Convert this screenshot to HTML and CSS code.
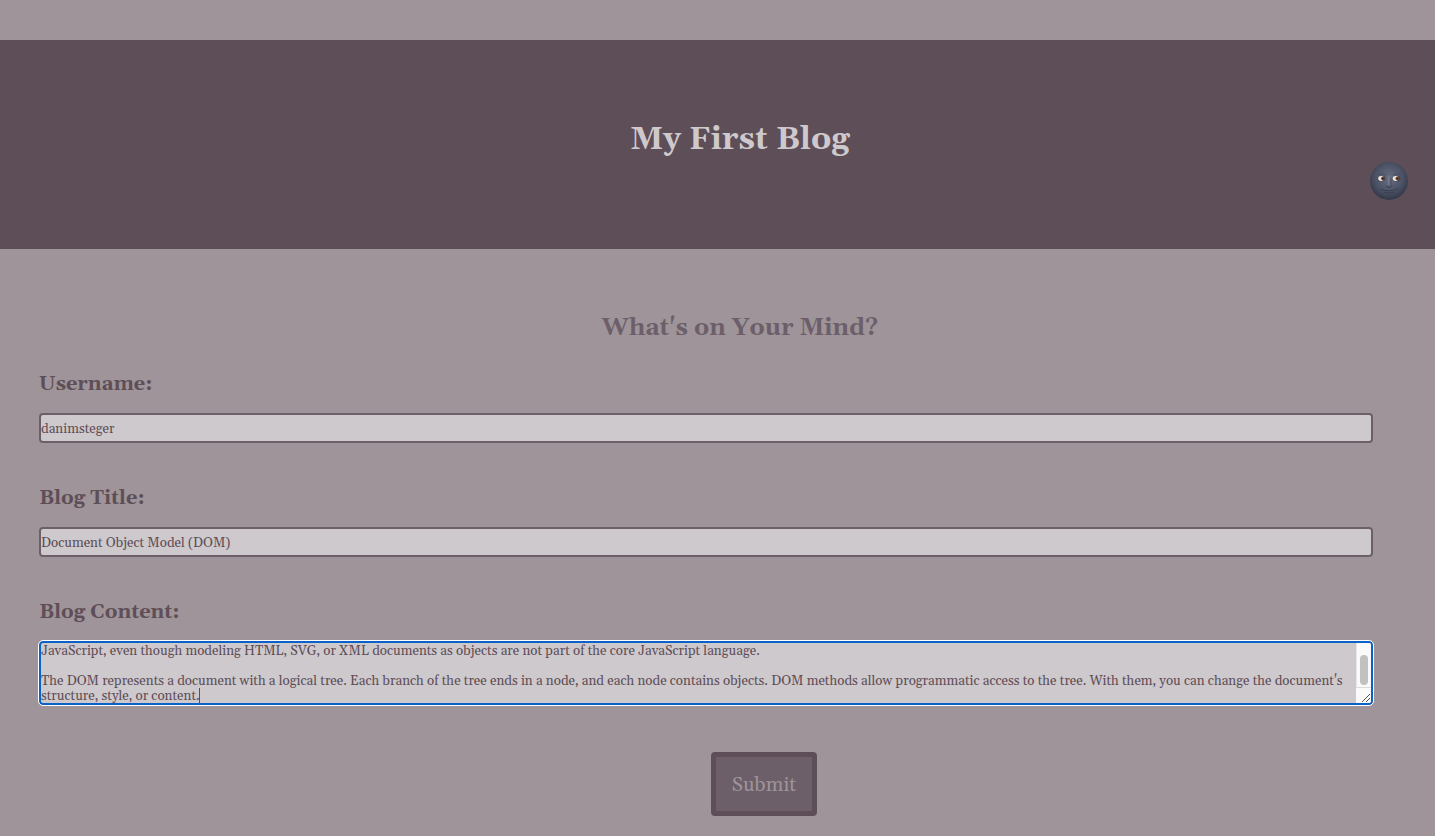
FILE: index.html
```
<!DOCTYPE html>
<html lang="en">
<head>
<meta charset="utf-8">
<title>My First Blog</title>
<link rel="stylesheet" href="styles.css">
</head>
<body>
<header class="banner">
  <h1 class="banner-title">My First Blog</h1>
  <button class="theme-toggle" type="button" aria-label="Toggle dark mode">
    <svg viewBox="0 0 38 38" width="38" height="38" aria-hidden="true">
      <defs>
        <radialGradient id="moon" cx="50%" cy="42%" r="55%">
          <stop offset="0" stop-color="#666e82"/>
          <stop offset="0.65" stop-color="#4d5366"/>
          <stop offset="1" stop-color="#363b4b"/>
        </radialGradient>
      </defs>
      <circle cx="19" cy="19" r="19" fill="url(#moon)"/>
      <path d="M7 13Q11 10 16 13M23 13Q28 10 32 13" fill="none" stroke="#484e60" stroke-width="1"/>
      <ellipse cx="11.500" cy="16.500" rx="4" ry="2.800" fill="#45414a"/>
      <ellipse cx="26.500" cy="16.500" rx="4" ry="2.800" fill="#45414a"/>
      <ellipse cx="11" cy="16.500" rx="2.800" ry="2.400" fill="#e9e3dd"/>
      <ellipse cx="25.500" cy="16.500" rx="2.800" ry="2.400" fill="#e9e3dd"/>
      <circle cx="12.800" cy="16.500" r="1.800" fill="#75502f"/>
      <circle cx="27.300" cy="16.500" r="1.800" fill="#75502f"/>
      <circle cx="12.800" cy="16.500" r="0.900" fill="#211b20"/>
      <circle cx="27.300" cy="16.500" r="0.900" fill="#211b20"/>
      <path d="M19 14L18.500 23" fill="none" stroke="#6f788c" stroke-width="2"/>
      <path d="M21 16L21 23" fill="none" stroke="#4b5164" stroke-width="1"/>
      <path d="M16 24Q19 27 22 24M11 27Q19 31 27 27M15 30.500Q19 32 23 30.500" fill="none" stroke="#383e4f" stroke-width="1" stroke-linecap="round"/>
    </svg>
  </button>
</header>
<main class="page">
  <h2 class="form-title">What's on Your Mind?</h2>
  <form class="blog-form">
    <label class="label" for="username">Username:</label>
    <input class="field" id="username" type="text" value="danimsteger">
    <label class="label" for="title">Blog Title:</label>
    <input class="field" id="title" type="text" value="Document Object Model (DOM)">
    <label class="label" for="content">Blog Content:</label>
    <div class="editor">
      <textarea class="content" id="content" rows="4">JavaScript, even though modeling HTML, SVG, or XML documents as objects are not part of the core JavaScript language.

The DOM represents a document with a logical tree. Each branch of the tree ends in a node, and each node contains objects. DOM methods allow programmatic access to the tree. With them, you can change the document's structure, style, or content.</textarea>
      <span class="caret"></span>
      <div class="scrollbar">
        <div class="track"><div class="thumb"></div></div>
        <svg class="grip" viewBox="0 0 15 15" width="15" height="15" aria-hidden="true"><path d="M6 14L14 6M10 14L14 10" fill="none" stroke="#555" stroke-width="1"/></svg>
      </div>
    </div>
    <div class="actions"><button class="submit" type="submit">Submit</button></div>
  </form>
</main>
</body>
</html>
```
FILE: styles.css
```
* { box-sizing: border-box; }
body {
  margin: 0;
  padding-top: 40px;
  background: #9e9499;
  color: #5e4e57;
  font-family: Georgia, Gelasio, "Liberation Serif", serif;
}
.banner {
  position: relative;
  padding: 78px 0 87px 45px;
  background: #5e4e57;
}
.banner-title {
  margin: 0;
  color: #cec9cd;
  font-size: 32px;
  line-height: 44px;
  text-align: center;
}
.theme-toggle {
  position: absolute;
  right: 27px;
  bottom: 49px;
  padding: 0;
  border: 0;
  background: none;
}
.theme-toggle svg { display: block; }
.page { padding: 61px 62px 20px 39px; }
.form-title {
  margin: 0 0 25px;
  padding-left: 68px;
  color: #6d5f69;
  font-size: 24px;
  line-height: 36px;
  text-align: center;
}
.blog-form {
  display: flex;
  flex-direction: column;
}
.label {
  margin-bottom: 15px;
  font-size: 20px;
  font-weight: bold;
  line-height: 27px;
}
.field {
  width: 100%;
  height: 30px;
  margin-bottom: 42px;
  padding: 2px 0 0;
  border: 2px solid #6d5f69;
  border-radius: 4px;
  background: #cec9cd;
  color: #5e4e57;
  font-family: inherit;
}
.editor {
  position: relative;
  margin-bottom: 47px;
  border: 2px solid #0a62c8;
  border-radius: 4px;
  outline: 1px solid #fff;
  background: #cec9cd;
}
.content {
  display: block;
  width: 100%;
  margin-bottom: -1px;
  padding: 1px 15px 0 0;
  border: 0;
  outline: 0;
  resize: none;
  overflow: hidden;
  background: none;
  color: #5e4e57;
  font-family: inherit;
  line-height: 15px;
}
.caret {
  position: absolute;
  left: 158px;
  bottom: 0;
  width: 1px;
  height: 15px;
  background: #5e4e57;
}
.scrollbar {
  position: absolute;
  top: 0;
  right: 0;
  bottom: 0;
  display: flex;
  flex-direction: column;
  width: 15px;
  border-radius: 0 2px 2px 0;
  background: #fafafa;
}
.track {
  flex: 1;
  padding: 12px 3px 2px;
  border-left: 1px solid #e8e8e8;
  border-bottom: 1px solid #dcdcdc;
}
.thumb {
  height: 100%;
  border-radius: 4px;
  background: #c1c1c1;
}
.grip { display: block; }
.actions {
  display: flex;
  justify-content: center;
  padding-left: 116px;
}
.submit {
  padding: 15px 16px 13px;
  border: 5px solid #5e4e57;
  border-radius: 4px;
  background: #6d5f69;
  color: #9e9499;
  font-family: inherit;
  font-size: 20px;
  line-height: 26px;
}
```
